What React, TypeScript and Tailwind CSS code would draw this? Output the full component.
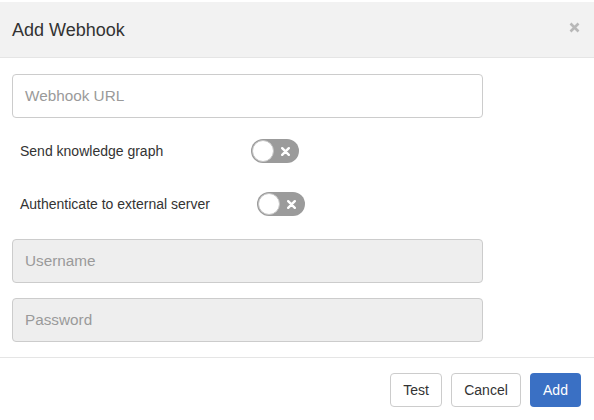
import React from "react";

function Toggle({ className = "" }: { className?: string }) {
  return (
    <div className={`relative w-[48px] h-[24px] rounded-full bg-[#9b9b9b] ${className}`}>
      <div className="absolute left-[1px] top-[1px] w-[22px] h-[22px] rounded-full bg-white border border-[#c4c4c4]" />
      <svg className="absolute left-[30px] top-[8px]" width="9" height="9" viewBox="0 0 9 9">
        <path d="M1.2 1.2 L7.8 7.8 M7.8 1.2 L1.2 7.8" stroke="#ffffff" strokeWidth="2.4" strokeLinecap="round" />
      </svg>
    </div>
  );
}

export default function App() {
  return (
    <div className="w-[594px] h-[420px] bg-white pt-[2px] text-[#333333]" style={{ fontFamily: '"Liberation Sans", Arial, sans-serif' }}>
      <div className="h-[56px] bg-[#f2f2f2] border-b border-[#e5e5e5] flex items-center justify-between pl-[12px] pr-[14px]">
        <div className="text-[18px] leading-none text-[#333]">Add Webhook</div>
        <svg width="11" height="11" viewBox="0 0 11 11" className="mt-[-5px]">
          <path d="M1.5 1.5 L9.5 9.5 M9.5 1.5 L1.5 9.5" stroke="#b8b8b8" strokeWidth="2.6" />
        </svg>
      </div>
      <div className="px-[12px] pt-[16px]">
        <div className="w-[471px] h-[44px] border border-[#cccccc] rounded-[4px] bg-white flex items-center pl-[12px] text-[15.3px] text-[#9a9a9a]">
          Webhook URL
        </div>
        <div className="mt-[21px] h-[24px] flex items-center pl-[8px]">
          <span className="text-[14px] text-[#333]">Send knowledge graph</span>
          <Toggle className="ml-[88px]" />
        </div>
        <div className="mt-[29px] h-[24px] flex items-center pl-[8px]">
          <span className="text-[14px] text-[#333]">Authenticate to external server</span>
          <Toggle className="ml-[47px]" />
        </div>
        <div className="mt-[23px] w-[471px] h-[44px] border border-[#cccccc] rounded-[4px] bg-[#eeeeee] flex items-center pl-[12px] text-[15.3px] text-[#9a9a9a]">
          Username
        </div>
        <div className="mt-[15px] w-[471px] h-[44px] border border-[#cccccc] rounded-[4px] bg-[#eeeeee] flex items-center pl-[12px] text-[15.3px] text-[#9a9a9a]">
          Password
        </div>
      </div>
      <div className="mt-[15px] border-t border-[#e5e5e5] flex justify-end gap-[9px] pt-[15px] pr-[13px]">
        <div className="h-[34px] w-[52px] border border-[#cccccc] rounded-[4px] flex items-center justify-center text-[14px] text-[#333]">Test</div>
        <div className="h-[34px] w-[70px] border border-[#cccccc] rounded-[4px] flex items-center justify-center text-[14px] text-[#333]">Cancel</div>
        <div className="h-[34px] w-[51px] rounded-[4px] bg-[#3a70c4] flex items-center justify-center text-[14px] text-white">Add</div>
      </div>
    </div>
  );
}
